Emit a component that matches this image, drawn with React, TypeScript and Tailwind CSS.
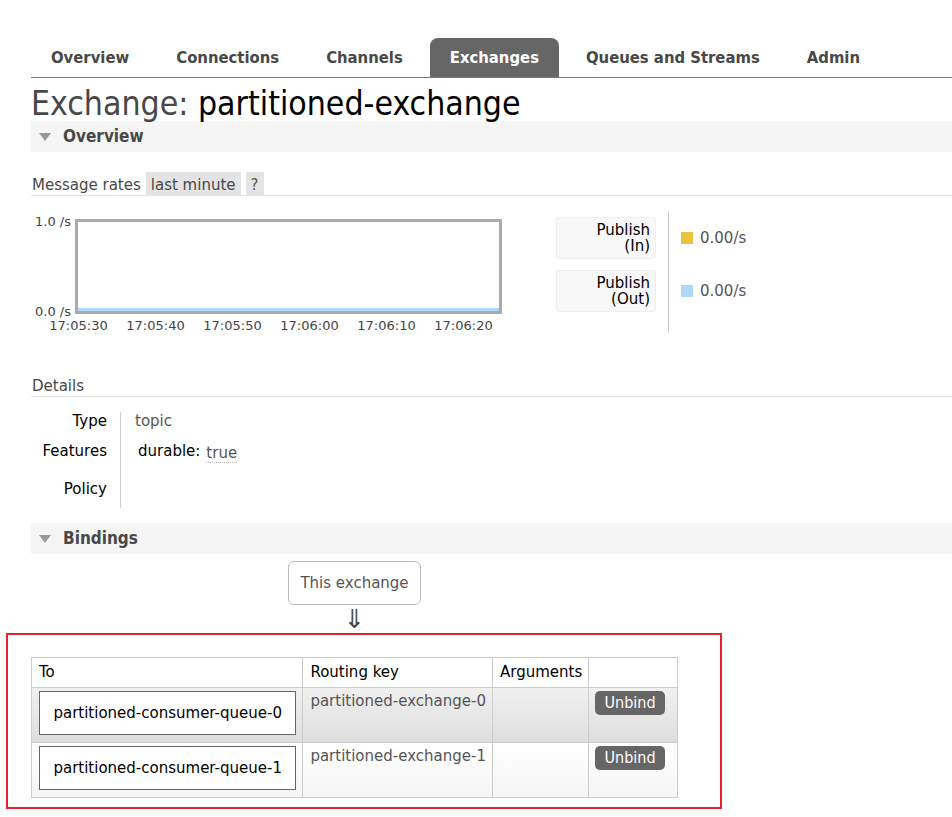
const cond = "font-['DejaVu_Sans_Condensed','DejaVu_Sans',sans-serif] [font-stretch:condensed]"

const tabs = ['Overview', 'Connections', 'Channels', 'Exchanges', 'Queues and Streams', 'Admin']

function Triangle() {
  return (
    <svg width="12" height="8" viewBox="0 0 12 8" className="shrink-0">
      <path d="M0 0 L12 0 L6 8 Z" fill="#999" />
    </svg>
  )
}

function SectionBar({ title }: { title: string }) {
  return (
    <div className="h-[31px] bg-[#f5f5f5] flex items-center pl-[8px] gap-[12px]">
      <Triangle />
      <span className={`${cond} font-bold text-[17px] text-[#484848]`}>{title}</span>
    </div>
  )
}

const times = ['17:05:30', '17:05:40', '17:05:50', '17:06:00', '17:06:10', '17:06:20']

const bindings = [
  { to: 'partitioned-consumer-queue-0', key: 'partitioned-exchange-0', bg: 'bg-gradient-to-b from-[#f0f0f0] to-[#dedede]' },
  { to: 'partitioned-consumer-queue-1', key: 'partitioned-exchange-1', bg: 'bg-gradient-to-b from-white to-[#f5f5f5]' },
]

export default function App() {
  return (
    <div className="min-h-screen bg-white pl-[31px] pt-[38px] font-['DejaVu_Sans',sans-serif] text-[15px] text-black overflow-hidden">
      {/* nav */}
      <nav className="flex gap-[7px] border-b border-[#777]">
        {tabs.map((t) => (
          <div
            key={t}
            className={`${cond} font-bold text-[16.5px] h-[39px] pt-[2px] px-[20px] flex items-center rounded-t-[8px] ${
              t === 'Exchanges' ? 'bg-[#666] text-white' : 'text-[#484848]'
            }`}
          >
            {t}
          </div>
        ))}
      </nav>

      <h1 className={`${cond} text-[33.5px] leading-[35px] pt-[8px] font-normal whitespace-nowrap`}>
        <span className="text-[#484848]">Exchange: </span>
        <span className="text-black">partitioned-exchange</span>
      </h1>

      <SectionBar title="Overview" />

      {/* message rates */}
      <div className="mt-[20px] flex items-end gap-[5px] border-b border-[#e4e4e4] text-[#484848]">
        <span className="pt-[3px] leading-[20px] pl-[1px]">Message rates</span>
        <span className="bg-[#e4e4e4] px-[5px] pt-[3px] leading-[20px]">last minute</span>
        <span className="bg-[#e4e4e4] px-[5px] pt-[3px] leading-[20px] text-[#555]">?</span>
      </div>

      <div className="flex mt-[15px]">
        {/* chart */}
        <div className="pt-[8px]">
          <div className="flex">
            <div className="w-[44px] h-[95px] flex flex-col justify-between text-right pr-[4px] text-[13px] text-[#444]">
              <span className="leading-[14px] -mt-[4px]">1.0 /s</span>
              <span className="leading-[14px] -mb-[5px]">0.0 /s</span>
            </div>
            <div className="w-[427px] h-[95px] border-[3px] border-[#aaa] flex flex-col justify-end">
              <div className="h-[3px] bg-[#afd8f8]" />
            </div>
          </div>
          <div className="flex ml-[9px] mt-[5px] text-[13px] leading-[14px] text-[#444]">
            {times.map((t) => (
              <span key={t} className="w-[77px] text-center">
                {t}
              </span>
            ))}
          </div>
        </div>

        {/* legend */}
        <div className="ml-[54px] flex">
          <div className="flex flex-col gap-[11px] pt-[6px] pr-[12px] pb-[5px] border-r border-[#ccc]">
            {['(In)', '(Out)'].map((l) => (
              <div
                key={l}
                className="w-[100px] h-[42px] bg-[#f8f8f8] border border-[#eee] rounded-[3px] text-right pr-[5px] leading-[16px] flex items-center justify-end"
              >
                <span>
                  Publish
                  <br />
                  {l}
                </span>
              </div>
            ))}
          </div>
          <div className="flex flex-col gap-[11px] pt-[6px] pl-[12px] text-[#555]">
            {['bg-[#edc240]', 'bg-[#afd8f8]'].map((c, i) => (
              <div key={i} className="h-[42px] flex items-center gap-[7px]">
                <span className={`w-[12px] h-[12px] ${c}`} />
                <span>0.00/s</span>
              </div>
            ))}
          </div>
        </div>
      </div>

      {/* details */}
      <div className="mt-[44px] border-b border-[#e4e4e4] text-[#484848] leading-[18px] pb-[1px] pl-[1px]">Details</div>
      <div className="mt-[15px] flex">
        <div className="w-[90px] border-r border-[#ccc] text-right pr-[13px] leading-[17px]">
          <div className="h-[30px] pt-[1px]">Type</div>
          <div className="h-[38px] pt-[1px]">Features</div>
          <div className="h-[28px] pt-[1px]">Policy</div>
        </div>
        <div className="leading-[17px]">
          <div className="h-[30px] pl-[14px] pt-[1px] text-[#555]">topic</div>
          <div className="h-[38px] pl-[17px] pt-[1px] flex items-start gap-[6px]">
            <span>durable:</span>
            <span className="text-[#555] border-b border-dotted border-[#bbb] mt-[2px]">true</span>
          </div>
          <div className="h-[28px]" />
        </div>
      </div>

      <div className="mt-[15px]">
        <SectionBar title="Bindings" />
      </div>

      {/* bindings */}
      <div className="ml-[257px] mt-[7px] w-[133px] flex flex-col items-center">
        <div className="w-[133px] h-[44px] border border-[#bbb] rounded-[6px] flex items-center justify-center text-[#555]">
          This exchange
        </div>
        <div className="text-[26px] leading-[28px] text-[#484848]">⇓</div>
      </div>

      <div className="-ml-[25px] w-[716px] h-[176px] border-2 border-[#e8202a] pl-[23px] pt-[22px]">
        <table className="border-collapse border border-[#ccc] w-[647px]">
          <thead>
            <tr className="h-[30px]">
              <th className="w-[272px] border border-[#ccc] text-left font-normal pl-[7px] align-bottom pb-[4px]">To</th>
              <th className="w-[190px] border border-[#ccc] text-left font-normal pl-[7px] align-bottom pb-[4px]">Routing key</th>
              <th className="w-[96px] border border-[#ccc] text-left font-normal pl-[7px] align-bottom pb-[4px]">Arguments</th>
              <th className="w-[89px] border border-[#ccc]" />
            </tr>
          </thead>
          <tbody>
            {bindings.map((b) => (
              <tr key={b.to} className={`h-[55px] ${b.bg}`}>
                <td className="border border-[#ccc] align-top pt-[3px] pl-[7px] pr-[6px]">
                  <div className="h-[44px] border border-[#666] bg-white flex items-center justify-center">{b.to}</div>
                </td>
                <td className="border border-[#ccc] align-top pt-[3px] pl-[7px] text-[#555] leading-[20px]">{b.key}</td>
                <td className="border border-[#ccc]" />
                <td className="border border-[#ccc] align-top pt-[3px] pl-[6px]">
                  <div className={`${cond} w-[70px] h-[24px] bg-[#666] text-white rounded-[5px] flex items-center justify-center text-[16px]`}>
                    Unbind
                  </div>
                </td>
              </tr>
            ))}
          </tbody>
        </table>
      </div>
    </div>
  )
}
